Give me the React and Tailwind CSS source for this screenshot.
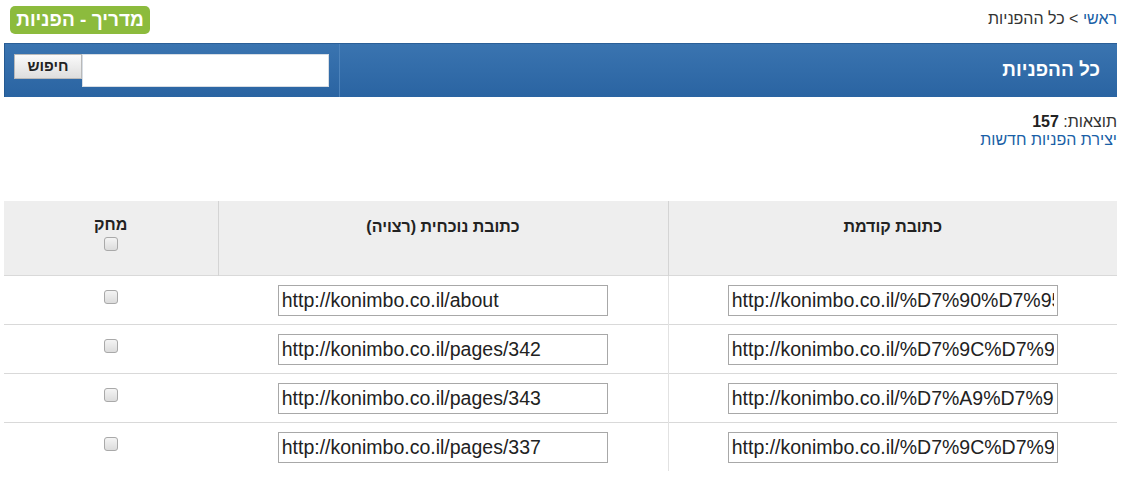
const ROWS = [
  { from: 'http://konimbo.co.il/%D7%90%D7%95%D7%93%D7%95%D7%AA', to: 'http://konimbo.co.il/about' },
  { from: 'http://konimbo.co.il/%D7%9C%D7%9E%D7%94', to: 'http://konimbo.co.il/pages/342' },
  { from: 'http://konimbo.co.il/%D7%A9%D7%90%D7%9C%D7%95%D7%AA', to: 'http://konimbo.co.il/pages/343' },
  { from: 'http://konimbo.co.il/%D7%9C%D7%99%D7%A7%D7%95%D7%97%D7%95%D7%AA', to: 'http://konimbo.co.il/pages/337' },
]

function Checkbox() {
  return (
    <span className="inline-block w-[14px] h-[14px] rounded-[3px] border border-[#a9a9a9] bg-gradient-to-b from-[#f4f4f4] to-[#dcdcdc]" />
  )
}

function UrlInput({ value }) {
  return (
    <input
      dir="ltr"
      readOnly
      value={value}
      className="w-[330px] h-[31px] border border-[#a8a8a8] bg-white px-[3px] text-[19.5px] text-[#222] outline-none font-['Liberation_Sans',Arial,sans-serif]"
    />
  )
}

export default function App() {
  return (
    <div dir="rtl" className="bg-white min-h-[483px] pl-[4px] pr-[8px] font-['Liberation_Sans',Arial,sans-serif] text-[#333]">
      {/* Top line: breadcrumb + guide badge */}
      <div className="flex items-center justify-between h-[43px] pt-[1px]">
        <div className="text-[16px] text-[#333] -mt-[7px]">
          <a href="#" className="text-[#1a5fa6]">ראשי</a>
          <span> &gt; כל ההפניות</span>
        </div>
        <a
          href="#"
          className="ml-[6px] -mt-[4px] h-[28px] w-[140px] flex items-center justify-center rounded-[5px] bg-[#8cbb3d] text-white text-[19px] font-bold"
        >
          מדריך - הפניות
        </a>
      </div>

      {/* Blue title bar */}
      <div className="flex h-[54px] bg-gradient-to-b from-[#3a74b0] to-[#2a64a2] border-t border-[#2b5f97]">
        <div className="flex-1 flex items-center pr-[17px] text-white text-[19px] font-bold">
          כל ההפניות
        </div>
        <div className="w-[336px] flex items-center pr-[10px] border-r border-r-[#4d83bb] shadow-[inset_1px_0_0_#255a92]">
          <input className="w-[247px] h-[33px] bg-white border border-[#d7dde4] outline-none" />
          <button className="w-[68px] h-[25px] -mt-[8px] bg-gradient-to-b from-[#fafafa] to-[#dedede] border border-[#b9b9b9] text-[15px] font-bold text-[#222]">
            חיפוש
          </button>
        </div>
      </div>

      {/* Summary */}
      <div className="mt-[16px] text-[16px] leading-[18px]">
        <div>
          <span className="text-[#333]">תוצאות: </span>
          <span className="font-bold text-[#222]">157</span>
        </div>
        <a href="#" className="text-[#1a5fa6]">יצירת הפניות חדשות</a>
      </div>

      {/* Table */}
      <table className="mt-[52px] w-full border-collapse text-[16px]">
        <thead>
          <tr className="h-[74px] bg-[#eeeeee] align-top border-b border-[#d9d9d9]">
            <th className="w-[449px] pt-[14px] font-bold text-[#222]">כתובת קודמת</th>
            <th className="w-[450px] pt-[14px] font-bold text-[#222] border-r border-[#d4d4d4]">כתובת נוכחית (רצויה)</th>
            <th className="pt-[14px] font-bold text-[#222] border-r border-[#d4d4d4]">
              <div className="leading-[20px]">מחק</div>
              <div className="mt-[2px] flex justify-center"><Checkbox /></div>
            </th>
          </tr>
        </thead>
        <tbody>
          {ROWS.map((row, i) => (
            <tr key={row.to} className={`h-[49px] ${i < ROWS.length - 1 ? 'border-b border-[#d9d9d9]' : ''}`}>
              <td className="text-center align-middle pt-[1px] border-l border-[#e2e2e2]">
                <UrlInput value={row.from} />
              </td>
              <td className="text-center align-middle pt-[1px]">
                <UrlInput value={row.to} />
              </td>
              <td className="text-center align-top pt-[11px]">
                <Checkbox />
              </td>
            </tr>
          ))}
        </tbody>
      </table>
    </div>
  )
}
